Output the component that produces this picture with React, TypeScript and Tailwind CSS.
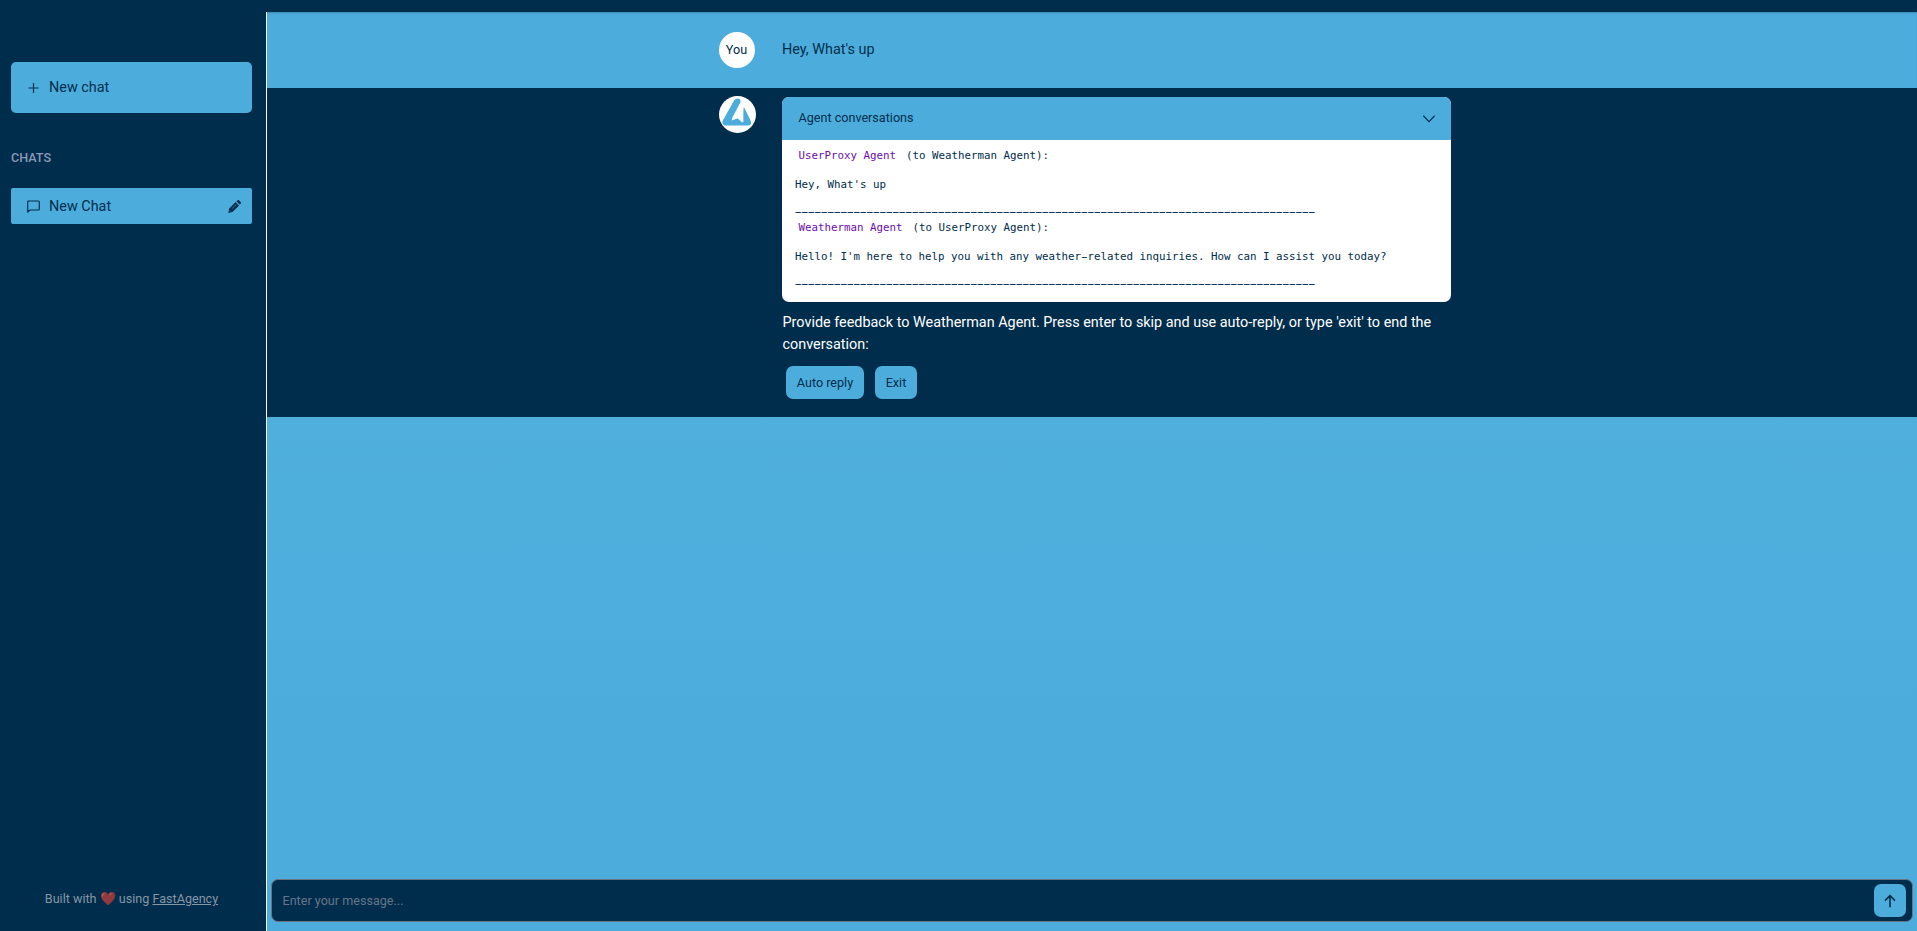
import { Fragment, type ReactNode } from "react";

const RULE = "−".repeat(80);

function Message({ from, to, children }: { from: string; to: string; children: ReactNode }) {
  return (
    <div>
      <p>
        <span className="pr-[3.5px] pl-[3.5px] text-[#6a0dad]">{from}</span> (to {to}):
      </p>
      <p className="mt-[14.4px]">{children}</p>
      <p className="mt-[13.4px] mb-px">{RULE}</p>
    </div>
  );
}

function Sidebar() {
  return (
    <aside className="flex w-[267px] shrink-0 flex-col border-r border-white px-[11px] pt-[50px]">
      <button className="flex h-[51px] w-[241px] items-center rounded-[5px] bg-[#4caddd] pl-4 text-[14.4px]">
        <svg className="mr-[10px] size-3" viewBox="0 0 12 12" fill="none" stroke="currentColor" strokeWidth="1.2">
          <path d="M6.5 1v10M1.5 6h10" />
        </svg>
        New chat
      </button>
      <h3 className="mt-[34px] text-[12.6px] leading-[22px] font-medium text-[#8a99b5]">CHATS</h3>
      <a className="mt-[19px] flex h-9 w-[241px] items-center rounded-[2px] bg-[#4caddd] pl-4 pr-[11px] text-[14.4px]">
        <svg className="mr-[9px] size-[13px]" viewBox="0 0 13 13" fill="none" stroke="currentColor" strokeWidth="1.2" strokeLinejoin="round">
          <path d="M1.6 1h9.8a.9.9 0 0 1 .9.9v7.2a.9.9 0 0 1-.9.9H3L.7 12V1.9a.9.9 0 0 1 .9-.9Z" />
        </svg>
        <span className="flex-1 pt-px">New Chat</span>
        <svg className="size-[13px]" viewBox="0 0 13 13" fill="none">
          <path fill="currentColor" d="m8.4 1.3 3.3 3.3.9-.9c.6-.6.6-1.2 0-1.8L11.2.4c-.6-.6-1.2-.6-1.8 0ZM7.6 2l3.4 3.4-6.5 6.5-4.2 1 .9-4.4Z" />
          <path d="m4 8.7 4.4-4.4M1.6 10.4l1.1 1.1" stroke="#4caddd" strokeWidth=".6" />
        </svg>
      </a>
      <footer className="mt-auto flex h-[66px] w-[241px] justify-center pt-[24px] text-[12.6px] leading-5 text-[#8596a6]">
        <span>
          Built with <span className="text-[13px] opacity-60">❤️</span> using <a className="underline">FastAgency</a>
        </span>
      </footer>
    </aside>
  );
}

function Logo() {
  return (
    <svg className="size-[37px] shrink-0" viewBox="0 0 37 37">
      <circle cx="18.5" cy="18.5" r="18.5" fill="#fff" />
      <path fill="#4caddd" d="M15.2 4.2Q16.6 2.5 18.6 2.6 22 3 21.5 6L13.3 21.7 12.7 24.4 18.7 22.2 23.4 26.8 24.4 11.6Q25 11 25.5 12L31.8 25Q33 29 29.3 29.4H6Q2.5 28.7 3.6 25Z" />
      <path fill="#fff" d="m24.3 10.5.1 15.7-5-4.3-6.6 1.8Z" />
    </svg>
  );
}

export default function App() {
  return (
    <Fragment>
      <div className="flex h-[931px] flex-col overflow-hidden bg-[#002d4c] text-[#002d4c] [font-family:Roboto,sans-serif]">
        <header className="h-3 shrink-0" />
        <div className="flex min-h-0 flex-1">
          <Sidebar />
          <main className="flex min-w-0 flex-1 flex-col bg-linear-to-b from-[#54b1db] to-[#4caddd] to-80%">
            <section className="flex h-[76px] shrink-0 bg-[#4caddd] pt-5 pl-[452px] shadow-[inset_0_2px_2px_-1px_rgba(0,45,76,0.25)]">
              <div className="flex size-9 items-center justify-center rounded-full bg-white pr-px text-[12.6px]">You</div>
              <p className="ml-[27px] pt-[7px] text-[14.4px] leading-[22px]">Hey, What's up</p>
            </section>
            <section className="flex h-[329px] shrink-0 items-start bg-[#002d4c] pt-2 pl-[452px]">
              <Logo />
              <div className="mt-px ml-[26px] w-[669px]">
                <div className="overflow-hidden rounded-[7px] bg-white">
                  <div className="flex h-[43px] items-center justify-between bg-[#4caddd] pr-4 pl-[16.5px] text-[12.6px]">
                    Agent conversations
                    <svg className="size-3" viewBox="0 0 12 12" fill="none" stroke="currentColor" strokeWidth="1.1">
                      <path d="m.3 2.7 5.7 6 5.7-6" />
                    </svg>
                  </div>
                  <div className="h-[162px] pt-[9px] pl-[13px] text-[10.8px] leading-[14.4px] whitespace-nowrap [font-family:'DejaVu_Sans_Mono',monospace]">
                    <Message from="UserProxy Agent" to="Weatherman Agent">
                      Hey, What's up
                    </Message>
                    <Message from="Weatherman Agent" to="UserProxy Agent">
                      Hello! I'm here to help you with any weather<span className="inline-block scale-x-180">-</span>related inquiries. How can I assist you today?
                    </Message>
                  </div>
                </div>
                <p className="mt-[10px] pl-[0.5px] text-[14.4px] leading-[22px] text-white">
                  Provide feedback to Weatherman Agent. Press enter to skip and use auto-reply, or type 'exit' to end the conversation:
                </p>
                <div className="mt-[10px] ml-1 flex gap-[11px] text-[12.6px]">
                  <button className="h-[33px] w-[78px] rounded-[7px] bg-[#4caddd] pt-px">Auto reply</button>
                  <button className="h-[33px] w-[42px] rounded-[7px] bg-[#4caddd] pt-px">Exit</button>
                </div>
              </div>
            </section>
            <form className="mx-1 mt-auto mb-[9px] flex h-[43px] items-center rounded-[7px] border border-[#6b7280] bg-[#002d4c] pr-[6px] pl-[10.5px]">
              <span className="flex-1 pt-px text-[12.6px] text-[#66758a]">Enter your message...</span>
              <button type="button" className="flex h-[33px] w-8 items-center justify-center rounded-[7px] bg-[#4caddd]">
                <svg className="size-[14px]" viewBox="0 0 14 14" fill="none" stroke="currentColor" strokeWidth="1.6">
                  <path d="M7 13.2V1.8M2 6.6l5-5 5 5" />
                </svg>
              </button>
            </form>
          </main>
        </div>
      </div>
    </Fragment>
  );
}
